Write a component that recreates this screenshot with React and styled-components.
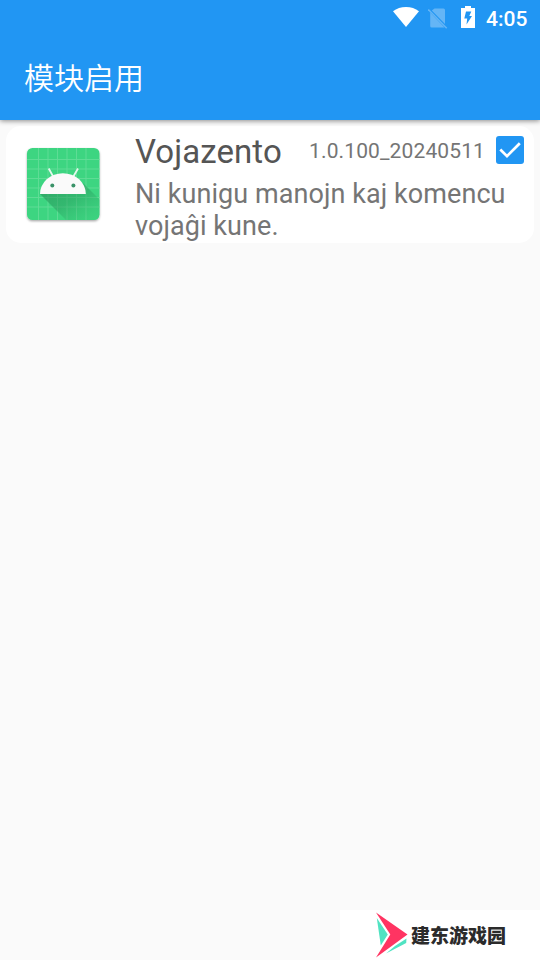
import React, { useState } from "react"
import styled, { createGlobalStyle } from "styled-components"

const modules = [
  {
    id: "vojazento",
    name: "Vojazento",
    version: "1.0.100_20240511",
    description: "Ni kunigu manojn kaj komencu vojaĝi kune.",
  },
]

function StatusBar() {
  return (
    <StatusRow>
      <svg width="26" height="20" viewBox="0 0 26 20">
        <path d="M0 4.300C3.600 1.500 8 0 13 0s9.400 1.500 13 4.300L13 20z" fill="#fff" />
      </svg>
      <svg width="20" height="21" viewBox="0 0 20 21">
        <path d="M6.500 0.500H15.500Q17 0.500 17 2V16L3.800 2.600zM2.200 4.500L16.500 19.500H3.700Q2.200 19.500 2.200 18z" fill="#64b5f6" />
        <path d="M0.300 1.500L18.700 20.300" stroke="#64b5f6" strokeWidth="1.500" />
      </svg>
      <svg width="14" height="22" viewBox="0 0 14 22">
        <path d="M4 0h6v2h4v20H0V2h4z" fill="#fff" />
        <path d="M5 5.500h5.300L8.300 10H11L5.500 18.500 6.200 12.500H3.300z" fill="#2196f3" />
      </svg>
      <Clock>4:05</Clock>
    </StatusRow>
  )
}

function AndroidIcon() {
  const lines = [11.500, 21, 30.500, 40, 49.500, 59]
  return (
    <svg width="78" height="80" viewBox="0 0 78 80">
      <defs>
        <linearGradient id="shade" x1="0" y1="0" x2="1" y2="1">
          <stop offset="0" stopColor="#268a54" stopOpacity="0.65" />
          <stop offset="0.500" stopColor="#2a9c5e" stopOpacity="0.5" />
          <stop offset="1" stopColor="#37c777" stopOpacity="0.1" />
        </linearGradient>
        <filter id="drop" x="-10%" y="-10%" width="120%" height="125%">
          <feDropShadow dx="0" dy="1.200" stdDeviation="1" floodOpacity="0.350" />
        </filter>
        <clipPath id="tile">
          <rect x="3" y="3" width="72.500" height="72" rx="5.500" />
        </clipPath>
      </defs>
      <rect x="3" y="3" width="72.500" height="72" rx="5.500" fill="#3dd581" filter="url(#drop)" />
      <g clipPath="url(#tile)">
        {lines.map((n) => (
          <path key={n} d={`M${n + 3} 3V75M3 ${n + 3}H76`} stroke="#62dd97" strokeWidth="0.900" />
        ))}
        <path d="M16 49L42 75H76V55L59 38 62 49z" fill="url(#shade)" />
      </g>
      <path d="M24.700 23.500L30 33M54 23.500L48.500 33" stroke="#e4f8ed" strokeWidth="1.800" />
      <path d="M16 49a22.900 20.800 0 0 1 45.800 0z" fill="#fafafa" />
      <circle cx="28.300" cy="40.500" r="2" fill="#3a9268" />
      <circle cx="49.400" cy="40.500" r="2" fill="#3a9268" />
    </svg>
  )
}

function ModuleCard({ module }) {
  const [enabled, setEnabled] = useState(true)

  return (
    <Card>
      <IconCell>
        <AndroidIcon />
      </IconCell>
      <Info>
        <Heading>
          <Name>{module.name}</Name>
          <Version>{module.version}</Version>
          <Check
            role="checkbox"
            aria-checked={enabled}
            aria-label={module.name}
            $checked={enabled}
            onClick={() => setEnabled(!enabled)}
          >
            {enabled && (
              <svg width="28" height="28" viewBox="0 0 28 28">
                <path d="M4.300 13.500L11 20.200 23.800 7.300" fill="none" stroke="#fff" strokeWidth="2.700" />
              </svg>
            )}
          </Check>
        </Heading>
        <Description>{module.description}</Description>
      </Info>
    </Card>
  )
}

export default function App() {
  return (
    <>
      <GlobalStyle />
      <Screen>
        <Header>
          <StatusBar />
          <Title>模块启用</Title>
        </Header>
        <List>
          {modules.map((m) => (
            <ModuleCard key={m.id} module={m} />
          ))}
        </List>
        <Brand>
          <svg width="32" height="46" viewBox="0 0 32 46">
            <path d="M0 0.500L31.500 22.500 0 45.500 14.300 22.500z" fill="#ff3462" />
            <path d="M0.800 6L11.800 22.500 4.800 33.500z" fill="#50e3c2" />
            <path d="M30.500 26.500L30.200 31 10 41.500 19 34z" fill="#50e3c2" />
          </svg>
          <BrandName>建东游戏园</BrandName>
        </Brand>
      </Screen>
    </>
  )
}

const GlobalStyle = createGlobalStyle`
  * {
    box-sizing: border-box;
  }
  body {
    margin: 0;
    font-family: Roboto, "Noto Sans CJK SC", sans-serif;
  }
  svg {
    display: block;
    flex-shrink: 0;
  }
`

const Screen = styled.div`
  height: 960px;
  width: 540px;
  display: flex;
  flex-direction: column;
  background-color: #fafafa;
  overflow: hidden;
`

const Header = styled.header`
  height: 120px;
  flex-shrink: 0;
  background-color: #2196f3;
  color: white;
  box-shadow: 0 1px 5px rgba(0, 0, 0, 0.45);
  z-index: 1;
`

const StatusRow = styled.div`
  height: 34px;
  display: flex;
  align-items: center;
  justify-content: flex-end;
  padding-right: 12px;
  svg:nth-child(2) {
    margin-left: 9.5px;
    margin-top: 2px;
  }
  svg:nth-child(3) {
    margin-left: 13px;
  }
`

const Clock = styled.span`
  width: 42px;
  margin-left: 11px;
  padding-top: 4px;
  font-size: 21px;
  font-weight: 500;
  line-height: 24px;
  white-space: nowrap;
`

const Title = styled.h1`
  margin: 0;
  padding-left: 24px;
  font-family: "Noto Sans CJK SC", sans-serif;
  font-size: 30px;
  font-weight: 350;
  line-height: 84px;
`

const List = styled.main`
  flex: 1;
  padding: 6px 6px 0;
`

const Card = styled.section`
  height: 117px;
  display: flex;
  background-color: white;
  border-radius: 15px;
`

const IconCell = styled.div`
  width: 129px;
  padding: 19px 0 0 18px;
`

const Info = styled.div`
  flex: 1;
`

const Heading = styled.div`
  height: 52px;
  display: flex;
  align-items: center;
  padding-right: 10px;
`

const Name = styled.h2`
  margin: 0;
  padding-bottom: 1px;
  color: #555;
  font-size: 33px;
  font-weight: 400;
  line-height: 51px;
  letter-spacing: 0.08px;
`

const Version = styled.span`
  margin-left: auto;
  margin-right: 11px;
  padding-bottom: 2px;
  color: #757575;
  font-size: 21px;
  letter-spacing: 0.12px;
`

const Check = styled.button`
  width: 28px;
  height: 28px;
  padding: 0;
  margin-bottom: 4px;
  border: ${(props) => (props.$checked ? "none" : "3px solid #757575")};
  border-radius: 3px;
  background-color: ${(props) => (props.$checked ? "#2196f3" : "transparent")};
`

const Description = styled.p`
  margin: 0;
  color: #757575;
  font-size: 27px;
  line-height: 32px;
  letter-spacing: 0.07px;
`

const Brand = styled.footer`
  width: 200px;
  height: 50px;
  align-self: flex-end;
  display: flex;
  align-items: center;
  padding-left: 36px;
  background-color: white;
`

const BrandName = styled.span`
  margin-left: 3px;
  padding-bottom: 2px;
  color: #2b2b2b;
  font-family: "Noto Sans CJK SC", sans-serif;
  font-size: 19px;
  font-weight: 900;
`
